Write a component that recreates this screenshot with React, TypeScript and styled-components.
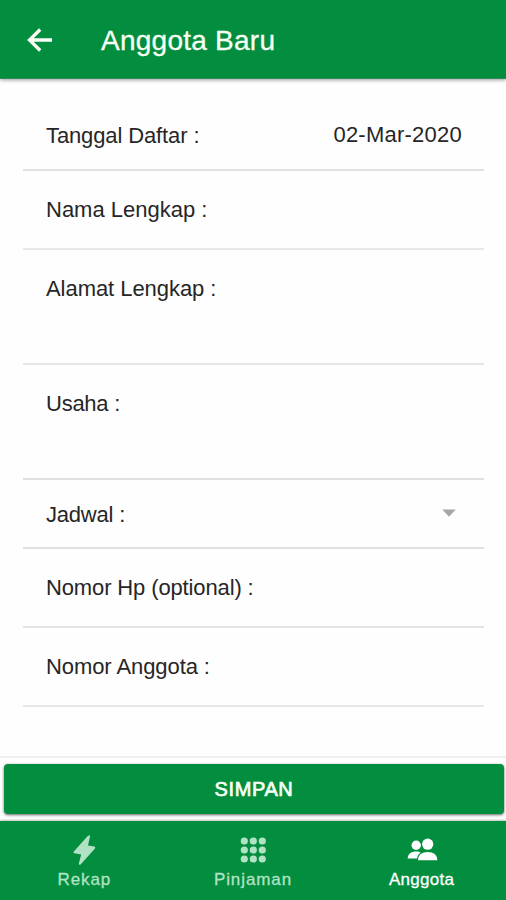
import React from "react";
import styled, { createGlobalStyle } from "styled-components";

const GREEN = "#028e3e";

const GlobalStyle = createGlobalStyle`
  * { box-sizing: border-box; }
  body { margin: 0; background: #fefefe; }
`;

const Screen = styled.div`
  display: flex;
  flex-direction: column;
  width: 100%;
  height: 900px;
  overflow: hidden;
  background: #fefefe;
  color: #262626;
  font-family: "Liberation Sans", Arial, sans-serif;
`;

const AppBar = styled.header`
  display: flex;
  align-items: center;
  flex: none;
  height: 79px;
  padding: 2px 0 0 27px;
  background: ${GREEN};
  border-bottom: 1px solid #2c8c55;
  box-shadow: 0 1px 4px rgba(0, 0, 0, 0.4);
`;

const BackButton = styled.button`
  display: flex;
  width: 26px;
  height: 24px;
  padding: 0;
  border: 0;
  background: none;
`;

const Title = styled.h1`
  margin: 1px 0 0 48px;
  color: #f8fff4;
  font-size: 28px;
  font-weight: 400;
  line-height: 36px;
  letter-spacing: 0.25px;
  -webkit-text-stroke: 0.3px #f8fff4;
`;

const Form = styled.form`
  flex: none;
  height: 677px;
  padding: 23px 22px 0 23px;
`;

const Field = styled.div<{ $height: number; $top: number; $line?: string }>`
  display: flex;
  justify-content: space-between;
  align-items: flex-start;
  height: ${(p) => p.$height}px;
  padding: ${(p) => p.$top}px 22px 0 23px;
  border-bottom: 2px solid ${(p) => p.$line ?? "#e4e4e4"};
`;

const Label = styled.label<{ $spacing: number }>`
  font-size: 22px;
  line-height: 26px;
  letter-spacing: ${(p) => p.$spacing}px;
  white-space: pre;
`;

const DateValue = styled.span`
  margin-top: -1px;
  font-size: 22px;
  line-height: 26px;
  letter-spacing: 0.24px;
`;

const Caret = styled.svg`
  width: 14px;
  height: 8px;
  margin: 7px 6px 0 0;
`;

const Footer = styled.div`
  flex: none;
  height: 65px;
  padding: 6px 2px 0 4px;
  border-top: 2px solid #efefef;
`;

const SaveButton = styled.button`
  display: block;
  width: 100%;
  height: 50px;
  padding: 1px 0 0 0;
  border: 0;
  border-radius: 4px;
  background: ${GREEN};
  box-shadow: 0 1px 3px rgba(0, 0, 0, 0.6);
  color: #f8fff4;
  font: 400 20px/49px "Liberation Sans", Arial, sans-serif;
  letter-spacing: 0.6px;
  -webkit-text-stroke: 0.7px #f8fff4;
`;

const TabBar = styled.nav`
  display: grid;
  grid-template-columns: repeat(3, 1fr);
  flex: 1;
  background: ${GREEN};
  box-shadow: 0 -1px 2px rgba(0, 0, 0, 0.25);
`;

const Tab = styled.a<{ $active?: boolean }>`
  display: flex;
  flex-direction: column;
  align-items: center;
  padding-top: 13px;
  color: ${(p) => (p.$active ? "#ffffff" : "#b2e2c4")};
`;

const TabIcon = styled.svg`
  width: 32px;
  height: 32px;
  fill: currentColor;
`;

const TabLabel = styled.span<{ $spacing: number }>`
  margin-top: 3px;
  font-size: 17px;
  line-height: 22px;
  letter-spacing: ${(p) => p.$spacing}px;
  -webkit-text-stroke: 0.3px currentColor;
`;

const fields = [
  { label: "Tanggal Daftar :", height: 69, top: 21, spacing: -0.12, line: "#e2e2e2", date: "02-Mar-2020" },
  { label: "Nama Lengkap :", height: 79, top: 26, spacing: 0, line: "#e8e8e8" },
  { label: "Alamat Lengkap :", height: 115, top: 26, spacing: -0.05, line: "#e6e6e6" },
  { label: "Usaha :", height: 115, top: 26, spacing: -0.25, line: "#e0e0e0" },
  { label: "Jadwal :", height: 69, top: 22, spacing: -0.2, line: "#e0e0e0", select: true },
  { label: "Nomor Hp (optional) :", height: 79, top: 26, spacing: -0.13, line: "#e4e4e4" },
  { label: "Nomor Anggota :", height: 79, top: 26, spacing: -0.08, line: "#e8e8e8" },
];

const dots = [-9, 0, 9];

export default function App() {
  return (
    <Screen>
      <GlobalStyle />
      <AppBar>
        <BackButton type="button" aria-label="Kembali">
          <svg width="26" height="24" viewBox="0 0 26 24" fill="none" stroke="#fbfff6" strokeWidth="3.3">
            <path d="M25 12H2.5M13.2 1.5L2.5 12L13.2 22.5" />
          </svg>
        </BackButton>
        <Title>Anggota Baru</Title>
      </AppBar>
      <Form>
        {fields.map((f) => (
          <Field key={f.label} $height={f.height} $top={f.top} $line={f.line}>
            <Label $spacing={f.spacing}>{f.label}</Label>
            {f.date && <DateValue>{f.date}</DateValue>}
            {f.select && (
              <Caret viewBox="0 0 14 8">
                <path d="M0.3 0.5H13.7L7 7.7Z" fill="#a6a6a6" />
              </Caret>
            )}
          </Field>
        ))}
      </Form>
      <Footer>
        <SaveButton type="button">SIMPAN</SaveButton>
      </Footer>
      <TabBar>
        <Tab>
          <TabIcon viewBox="0 0 32 32">
            <path d="M20 1.8L5.8 17.4Q4.8 18.8 6.4 19.2L13.2 20.4L10.8 29.4Q10.8 31.6 12.6 30.4L27 14.4Q27.8 13 26.4 12.6L20 11.4L22 2.6Q22 0.4 20 1.8Z" />
          </TabIcon>
          <TabLabel $spacing={0.9}>Rekap</TabLabel>
        </Tab>
        <Tab>
          <TabIcon viewBox="-16 -16 32 32">
            {dots.map((y) => dots.map((x) => <circle key={`${x}${y}`} cx={x + 0.3} cy={y} r="3.6" />))}
          </TabIcon>
          <TabLabel $spacing={0.9}>Pinjaman</TabLabel>
        </Tab>
        <Tab $active>
          <TabIcon viewBox="0 0 32 32">
            <circle cx="10.2" cy="11.2" r="4.7" />
            <circle cx="21.7" cy="10.2" r="5.6" />
            <path d="M1.7 24.5C1.7 20 5.3 17.5 10.2 17.5C12 17.5 13.6 17.9 14.8 18.6C12.6 20.2 11.4 22 11 24.5Z" />
            <path d="M12 26.3C12 20.8 16 18 21.7 18C27.4 18 31.3 20.8 31.3 26.3Z" />
          </TabIcon>
          <TabLabel $spacing={0.3}>Anggota</TabLabel>
        </Tab>
      </TabBar>
    </Screen>
  );
}
